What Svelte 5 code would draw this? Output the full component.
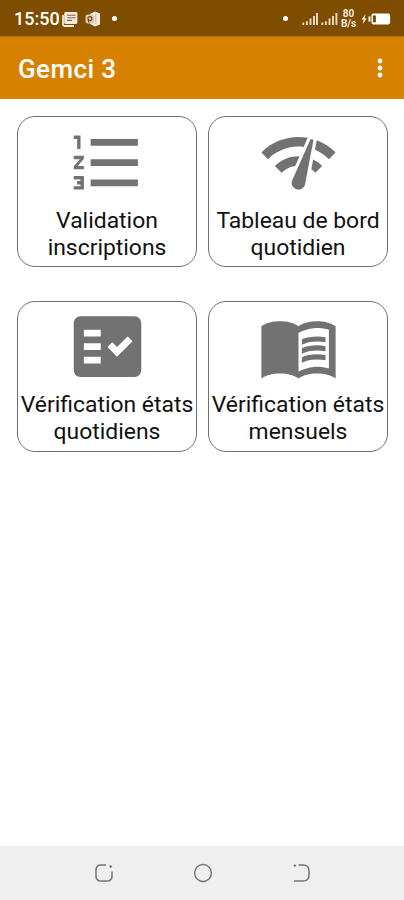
<script>
  const list = [
    'M2 17h2v.5H3v1h1v.5H2v1h3v-4H2v1zm1-9h1V4H2v1h1v3zm-1 3h1.8L2 13.1v.9h3v-1H3.2L5 10.9V10H2v1zm5-6v2h14V5H7zm0 14h14v-2H7v2zm0-6h14v-2H7v2z',
  ]
  const gauge = [
    'M15.9 5c-.17 0-.32.09-.41.23l-.07.15-5.18 11.65c-.16.29-.26.61-.26.96 0 1.11.9 2.01 2.01 2.01.96 0 1.77-.68 1.96-1.59l.01-.03L16.4 5.5c0-.28-.22-.5-.5-.5zM1 9l2 2c2.88-2.88 6.79-4.08 10.53-3.62l1.19-2.68C9.89 3.84 4.74 5.27 1 9zm20 2l2-2c-1.64-1.64-3.55-2.82-5.59-3.57l-.53 2.82c1.5.62 2.9 1.53 4.12 2.75zm-4 4l2-2c-.8-.8-1.7-1.42-2.66-1.89l-.55 2.92c.42.27.83.59 1.21.97zM5 13l2 2c1.13-1.13 2.56-1.79 4.03-2l1.28-2.88c-2.63-.08-5.3.87-7.31 2.88z',
  ]
  const check = [
    'M20 3H4c-1.1 0-2 .9-2 2v14c0 1.1.9 2 2 2h16c1.1 0 2-.9 2-2V5c0-1.1-.9-2-2-2zM10 17H5v-2h5v2zM10 13H5v-2h5v2zM10 9H5V7h5v2zM14.82 15L12 12.16l1.41-1.41 1.41 1.42L17.99 9l1.42 1.42L14.82 15z',
  ]
  const book = [
    'M17.5 4.5c-1.95 0-4.05.4-5.5 1.5-1.45-1.1-3.55-1.5-5.5-1.5S2.45 4.9 1 6v15.5C2.45 20.4 4.55 20 6.5 20s4.05.4 5.5 1.5c1.45-1.1 3.55-1.5 5.5-1.5s4.05.4 5.5 1.5V6c-1.45-1.1-3.55-1.5-5.5-1.5zm3.5 14c-1.1-.35-2.3-.5-3.5-.5-1.7 0-4.15.65-5.5 1.5V8c1.35-.85 3.8-1.5 5.5-1.5 1.2 0 2.4.15 3.5.5v11.5z',
    'M17.5 10.5c.88 0 1.73.09 2.5.26V9.24c-.79-.15-1.64-.24-2.5-.24-1.7 0-3.24.29-4.5.83v1.66c1.13-.64 2.7-.99 4.5-.99z',
    'M13 12.49v1.66c1.13-.64 2.7-.99 4.5-.99.88 0 1.73.09 2.5.26V11.9c-.79-.15-1.64-.24-2.5-.24-1.7 0-3.24.3-4.5.83z',
    'M17.5 14.33c-1.7 0-3.24.29-4.5.83v1.66c1.13-.64 2.7-.99 4.5-.99.88 0 1.73.09 2.5.26v-1.52c-.79-.16-1.64-.24-2.5-.24z',
  ]

  const tiles = [
    { lines: ['Validation', 'inscriptions'], icon: list },
    { lines: ['Tableau de bord', 'quotidien'], icon: gauge },
    { lines: ['Vérification états', 'quotidiens'], icon: check },
    { lines: ['Vérification états', 'mensuels'], icon: book },
  ]
</script>

<div class="screen">
  <div class="status">
    <span class="time">15:50</span>
    <svg class="news" width="16" height="16" viewBox="0 0 16 16">
      <path d="M1 4v9.5c0 .8.7 1.5 1.5 1.5H12" fill="none" stroke="#f3e9df" stroke-width="1.8" />
      <rect x="2.2" y="1" width="13.2" height="12" rx="1.5" fill="#f3e9df" />
      <path d="M5 4.2h8.5M5 6.8h8.5M5 9.4h5" stroke="#8d663a" stroke-width="1.1" />
    </svg>
    <svg class="office" width="16" height="16" viewBox="0 0 16 16">
      <path d="M5 3l5-2.5 5 2v11l-5 2L5 13z" fill="#f3e9df" />
      <rect x="0.5" y="3.5" width="8.5" height="9" rx="2" fill="#dac8b4" />
      <circle cx="4.9" cy="7.6" r="2" fill="none" stroke="#7d4a05" stroke-width="1.2" />
      <path d="M3.5 8v3.6" stroke="#7d4a05" stroke-width="1" />
      <path d="M10.8 3v10" stroke="#cdb79e" stroke-width="1" />
    </svg>
    <i class="dot"></i>
    <span class="grow"></span>
    <i class="dot"></i>
    <svg class="signals" width="36" height="14" viewBox="0 0 36 14">
      <path d="M1.3 13v-2.5M4.9 13V9.2M8.5 13V6.6M12 13V4M15 13V1M20.3 13v-2.5M23.9 13V9.2M27.5 13V6.6M31 13V4M34.4 13V1" stroke="#eadbca" stroke-width="1.9" />
    </svg>
    <span class="rate"><b>80</b><b>B/s</b></span>
    <svg class="battery" width="30" height="14" viewBox="0 0 30 14">
      <path d="M4.6 2L0.6 7.6h2.2L1.6 12l4-5.6H3.4z" fill="#fff" />
      <path d="M8.5 4.5v5" stroke="#fff" stroke-width="2" />
      <rect x="10.5" y="1.6" width="18.6" height="10.8" rx="1.8" fill="#fff" />
      <rect x="11.9" y="3.5" width="3" height="6.8" fill="#7d4a05" />
    </svg>
  </div>

  <header>
    <h1>Gemci 3</h1>
    <svg width="8" height="22" viewBox="0 0 8 22" fill="#fff">
      <circle cx="4" cy="4" r="2.4" />
      <circle cx="4" cy="11" r="2.4" />
      <circle cx="4" cy="18" r="2.4" />
    </svg>
  </header>

  <main>
    {#each tiles as tile}
      <button>
        <svg width="81" height="81" viewBox="0 0 24 24" fill="#727272" fill-rule="evenodd">
          {#each tile.icon as d}
            <path {d} />
          {/each}
        </svg>
        {#each tile.lines as line}
          <span>{line}</span>
        {/each}
      </button>
    {/each}
  </main>

  <nav>
    <svg width="20" height="20" viewBox="0 0 20 20">
      <path d="M12 2H7Q2 2 2 7v6q0 5 5 5h6q5 0 5-5V8.5" />
      <circle class="spot" cx="16.6" cy="3.6" r="1.3" />
    </svg>
    <svg width="20" height="20" viewBox="0 0 20 20">
      <circle cx="10" cy="10" r="8.4" />
    </svg>
    <svg width="20" height="20" viewBox="0 0 20 20">
      <path d="M6.5 2H11q6 0 6 6v4q0 6-6 6H2" />
      <circle class="spot" cx="2.9" cy="2.6" r="1.2" />
    </svg>
  </nav>
</div>

<style>
  :global(body) {
    margin: 0;
    background: #fff;
  }

  .screen {
    display: flex;
    flex-direction: column;
    width: 404px;
    height: 900px;
    font-family: Roboto, sans-serif;
    background: #fff;
  }

  .status {
    display: flex;
    align-items: center;
    box-sizing: border-box;
    height: 36px;
    padding: 1px 13px 0 14px;
    background: #7f4d00;
    color: #fff;
  }

  .time {
    width: 46px;
    font-size: 18px;
    font-weight: 500;
    white-space: nowrap;
  }

  .news {
    margin-left: 2px;
  }

  .office {
    margin-left: 7px;
  }

  .dot {
    width: 5px;
    height: 5px;
    margin-left: 11px;
    border-radius: 50%;
    background: #fff;
  }

  .grow {
    flex: 1;
  }

  .signals {
    margin-left: 14px;
  }

  .rate {
    display: flex;
    flex-direction: column;
    align-items: center;
    width: 17px;
    margin-left: 2px;
    font-size: 10px;
    line-height: 10px;
    color: #f3e9df;
  }

  .battery {
    margin-left: 4px;
  }

  header {
    display: flex;
    align-items: center;
    justify-content: space-between;
    box-sizing: border-box;
    height: 63px;
    padding: 0 20px 0 18px;
    background: #d68100;
    border-top: 1px solid #b96d00;
  }

  h1 {
    margin: 2px 0 0;
    font-size: 26px;
    line-height: 30px;
    font-weight: 500;
    letter-spacing: 0.4px;
    color: #fff;
  }

  main {
    flex: 1;
    display: grid;
    grid-template-columns: 180px 180px;
    grid-auto-rows: 151px;
    align-content: start;
    gap: 33.5px 11px;
    padding: 17px 0 0 17px;
  }

  button {
    display: flex;
    flex-direction: column;
    align-items: center;
    box-sizing: border-box;
    padding: 4.6px 0 0;
    border: 1px solid #707070;
    border-radius: 18px;
    background: #fff;
    font: 22.9px/27px Roboto, sans-serif;
    color: #111;
    white-space: nowrap;
  }

  button svg {
    flex: none;
    margin-bottom: 4px;
  }

  nav {
    display: flex;
    justify-content: center;
    align-items: center;
    gap: 79px;
    height: 54px;
    padding-left: 1px;
    background: #efefef;
  }

  nav svg {
    fill: none;
    stroke: #777;
    stroke-width: 1.5;
  }

  .spot {
    fill: #777;
    stroke: none;
  }
</style>
